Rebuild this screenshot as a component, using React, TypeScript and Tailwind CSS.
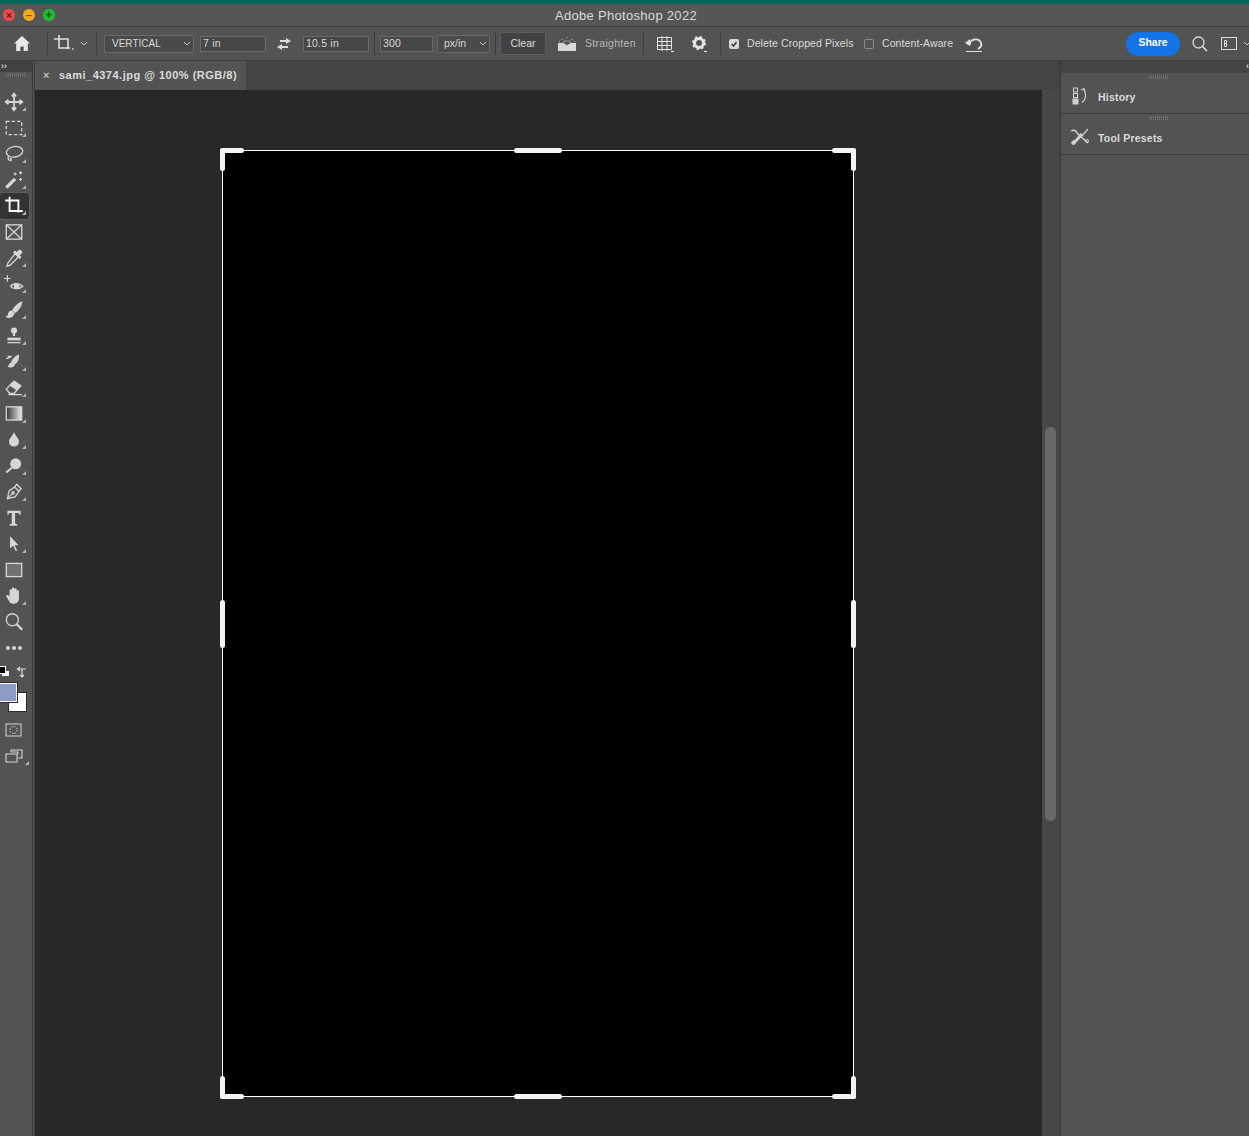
// App.tsx
// Photoshop window: crop tool active, empty panels
import type { ReactNode } from 'react'

const FONT = "font-['Liberation_Sans',Arial,sans-serif]"

// Small triangle in the corner of a tool with a flyout
const Corner = () => (
  <svg className="absolute right-[3px] bottom-[4px]" width="4" height="4" viewBox="0 0 4 4">
    <path d="M4 0v4H0z" fill="#b5b5b5" />
  </svg>
)

function Tool({ active, flyout = true, children }: { active?: boolean; flyout?: boolean; children: ReactNode }) {
  return (
    <div className="flex h-[26px] w-[32px] justify-start">
      <div className={`relative flex h-full w-[29px] items-center justify-center pr-[1px] ${active ? 'rounded-[2px] bg-[#333333] outline outline-1 outline-[#5f5f5f]' : ''}`}>
        <svg width="22" height="22" viewBox="0 0 20 20" fill="none" stroke="#d6d6d6" strokeWidth="1.200">
          {children}
        </svg>
        {flyout && <Corner />}
      </div>
    </div>
  )
}

const TOOLS: { active?: boolean; flyout?: boolean; icon: ReactNode }[] = [
  { icon: <path d="M10 3v14M3 10h14M8 5l2-2.500L12 5M8 15l2 2.500 2-2.500M5 8l-2.500 2L5 12M15 8l2.500 2-2.500 2" strokeWidth="1.600" /> },
  { icon: <rect x="3" y="4" width="14" height="12" strokeDasharray="3 2" strokeWidth="1.200" /> },
  { icon: <><ellipse cx="10.500" cy="8" rx="7.500" ry="4.800" transform="rotate(-10 10.500 8)" /><path d="M5 12c-1 2 0 4 2 4 1 0 1-2-1-2" /></> },
  { icon: <><path d="M3 17l8-8" strokeWidth="3" /><path d="M11 3v3M9.500 4.500h3M16 2v3M14.500 3.500h3M16 8v3M14.500 9.500h3" strokeWidth="1" /></> },
  { active: true, icon: <path d="M2 5h12v11M6 1.500v13h12" strokeWidth="1.700" stroke="#ffffff" /> },
  { flyout: false, icon: <><rect x="3" y="3.500" width="14" height="13" /><path d="M3 3.500l14 13M17 3.500l-14 13" /></> },
  { icon: <><path d="M11 6l3 3-7.500 7.500-3 1 1-3z" /><path d="M10 5l5 5 1-1-1.500-1.500 2-2c1-1-.5-3-2-2l-2 2L11 4z" fill="#d6d6d6" /></> },
  { icon: <><path d="M1 5h6M4 2v6" strokeWidth="1.100" /><path d="M7 12c2-3 8-3 11 0-3 3-9 3-11 0z" /><circle cx="12.500" cy="12" r="2" fill="#d6d6d6" /></> },
  { icon: <><path d="M17 3c-3 1-6 4-8 7l2 2c3-2 5-5 6-9z" fill="#d6d6d6" /><path d="M8 11c-2 0-3 2-3 3 0 1-1 2-2 2 2 1 6 1 7-3z" fill="#d6d6d6" /></> },
  { icon: <><circle cx="10" cy="5" r="2.800" fill="#d6d6d6" stroke="none" /><path d="M9 7h2v3H9z" fill="#d6d6d6" stroke="none" /><path d="M4 11.500h12v2.500H4z" fill="#d6d6d6" stroke="none" /><path d="M4 16h12" /></> },
  { icon: <><path d="M14 4c-3 1-5 4-6 6l2 2c2-1 4-4 4-8z" fill="#d6d6d6" /><path d="M8 11c-2 0-2 2-3 3 2 1 4 0 5-1z" fill="#d6d6d6" /><path d="M3 7l3-1-1-1 3 0" /><path d="M15 11v.1M17 9v.1M17 13v.1" strokeWidth="1.200" /></> },
  { icon: <><path d="M3 11l7-7 6 4-6 7H6z" /><path d="M10 4l6 4-3.500 3.500-6-4z" fill="#d6d6d6" /><path d="M5 16h12" /></> },
  { icon: <><defs><linearGradient id="grad" x1="0" x2="1" y1="0" y2="0"><stop offset="0" stopColor="#333" /><stop offset="1" stopColor="#eee" /></linearGradient></defs><rect x="3" y="3.500" width="14" height="12" fill="url(#grad)" /></> },
  { icon: <path d="M10 3c2 4 4.500 6 4.500 8.500a4.500 4.500 0 0 1-9 0C5.500 9 8 7 10 3z" fill="#d6d6d6" stroke="none" /> },
  { icon: <><circle cx="11.500" cy="8" r="5" fill="#d6d6d6" stroke="none" /><path d="M8 11.500L3 16" strokeWidth="1.800" /></> },
  { icon: <><path d="M4 16l1.500-7 5-3.500 4 4-3.500 5z" /><path d="M10.500 5.500l2-2.500 4 4-2.500 2.500M4 16l4.500-4.500" /><circle cx="9.200" cy="10.800" r="1" /></> },
  { flyout: false, icon: <path d="M4 3.500h12V7h-1l-1-1.500h-3V15l2 1v1H6v-1l2-1V5.500H5.500L5 7H4z" fill="#d6d6d6" stroke="none" /> },
  { icon: <path d="M6 2v13l3-3 2.500 5 2-1-2.500-4.500H15z" fill="#d6d6d6" stroke="#333" strokeWidth="0.600" /> },
  { flyout: false, icon: <rect x="3" y="4" width="14" height="12" fill="#707070" /> },
  { icon: <path d="M6 11V5c0-1.500 2-1.500 2 0V3.500c0-1.500 2.200-1.500 2.200 0V4c0-1.500 2.200-1.500 2.200 0v2c0-1.500 2.100-1.500 2.100 0v6c0 3-2 5-5 5-2.500 0-3.500-1-5-4L3 10.500c-.5-1.500 1.500-2 2.500-.8z" fill="#d6d6d6" stroke="none" /> },
  { flyout: false, icon: <><circle cx="8.500" cy="8" r="5.500" /><path d="M12.500 12l5 5" strokeWidth="2" /></> },
]

function Caret() {
  return (
    <svg width="8" height="5" viewBox="0 0 8 5" fill="none" stroke="#c8c8c8" strokeWidth="1">
      <path d="M1 1l3 3 3-3" />
    </svg>
  )
}

function Field({ w, children }: { w: string; children: ReactNode }) {
  return <div className={`${w} flex h-[16px] items-center border border-[#6a6a6a] bg-[#474747] pl-[2px] text-[10.5px] tracking-[0.2px] text-[#d8d8d8]`}>{children}</div>
}

const Sep = ({ cls }: { cls: string }) => <div className={`${cls} h-[23px] w-px bg-[#3d3d3d]`} />

const Grip = () => <div className="h-[4px] w-[20px] bg-[repeating-linear-gradient(90deg,#6e6e6e_0,#6e6e6e_1px,transparent_1px,transparent_2px)]" />

// Crop handles on top of the image
function Handle({ cls }: { cls: string }) {
  return <div className={`absolute rounded-[3px] bg-[#f4f4f4] ${cls}`} />
}

export default function App() {
  return (
    <div className={`flex h-[1136px] w-[1249px] flex-col overflow-hidden bg-[#535353] ${FONT}`}>
      {/* Bande du haut */}
      <div className="h-[4px] flex-none bg-[#00695c]" />

      {/* Title bar */}
      <div className="relative flex h-[23px] flex-none items-center justify-center border-b border-[#3a3a3a] bg-[#565656] pt-[2px] pl-[3px] text-[13px] tracking-[0.3px] text-[#d9d9d9]">
        Adobe Photoshop 2022
        <div className="absolute top-[5px] left-[3px] flex gap-[8px]">
          <div className="flex h-[12px] w-[12px] items-center justify-center rounded-full bg-[#f14b4e] text-[11px] leading-none font-bold text-[#7a1114]">×</div>
          <div className="flex h-[12px] w-[12px] items-center justify-center rounded-full bg-[#f3a723] text-[11px] leading-none font-bold text-[#7d4d06]">–</div>
          <div className="flex h-[12px] w-[12px] items-center justify-center rounded-full bg-[#1ec12f] text-[12px] leading-none font-bold text-[#0a5410]">+</div>
        </div>
      </div>

      {/* Options bar */}
      <div className="flex h-[34px] flex-none items-center border-b border-[#3d3d3d] bg-[#535353] text-[#d2d2d2] [&>*]:flex-none">
        <svg className="ml-[14px]" width="16" height="15" viewBox="0 0 16 15" fill="#e8e8e8">
          <path d="M8 0l8 7.500h-2.200V15H9.700v-4.500H6.300V15H2.200V7.500H0z" />
        </svg>
        <Sep cls="ml-[17px]" />
        <svg className="ml-[6px]" width="20" height="18" viewBox="0 0 20 18" fill="none" stroke="#e0e0e0" strokeWidth="1.600">
          <path d="M0 4h14v10M5 0v13h11M18 14h1.500" />
        </svg>
        <div className="ml-[6px]"><Caret /></div>
        <Sep cls="ml-[8px]" />

        <div className="ml-[7px] flex h-[18px] w-[90px] items-center justify-between rounded-[2px] border border-[#6a6a6a] bg-[#4a4a4a] pr-[2px] pl-[7px] text-[10px] text-[#d8d8d8]">
          VERTICAL <Caret />
        </div>
        <div className="ml-[6px]"><Field w="w-[66px]">7 in</Field></div>
        <svg className="ml-[11px]" width="14" height="12" viewBox="0 0 14 12" fill="#dcdcdc">
          <path d="M9 0l5 3-5 3V4H3V2h6zM5 6v2h6v2H5v2L0 9z" />
        </svg>
        <div className="ml-[12px]"><Field w="w-[66px]">10.5 in</Field></div>
        <Sep cls="ml-[5px]" />
        <div className="ml-[5px]"><Field w="w-[53px]">300</Field></div>
        <div className="ml-[4px] flex h-[18px] w-[53px] items-center justify-between rounded-[2px] border border-[#6a6a6a] bg-[#4a4a4a] pr-[2px] pl-[6px] text-[10.5px] text-[#d8d8d8]">
          px/in <Caret />
        </div>
        <Sep cls="ml-[5px]" />
        <div className="ml-[4px] flex h-[23px] w-[46px] items-center justify-center rounded-[2px] border border-[#5e5e5e] bg-[#424242] text-[10.5px] text-[#dcdcdc]">Clear</div>

        <svg className="ml-[12px]" width="18" height="14" viewBox="0 0 18 14" fill="#d8d8d8">
          <path d="M0 6h5l4 2.500L13 6h5v8H0z" />
          <path d="M5 6l1-2h6l1 2-4 2.500z" stroke="#d8d8d8" strokeWidth="0.500" fill="none" />
          <path d="M9 0v1M4 2l.5 1M14 2l-.5 1M1 4l1 .8M17 4l-1 .8" stroke="#d8d8d8" strokeWidth="0.800" />
        </svg>
        <span className="ml-[9px] w-[50px] text-[10.5px] tracking-[0.3px] whitespace-nowrap text-[#b9b9b9]">Straighten</span>
        <Sep cls="ml-[8px]" />
        <svg className="ml-[12px]" width="18" height="18" viewBox="0 0 18 18" fill="none" stroke="#e4e4e4" strokeWidth="1">
          <path d="M1.500 2.500h14v12h-14zM1.500 6.500h14M1.500 10.500h14M6 1v15M11 1v15" />
          <path d="M15 16.500h3" strokeWidth="1.200" />
        </svg>
        <svg className="ml-[17px]" width="18" height="18" viewBox="0 0 18 18">
          <circle cx="8" cy="8" r="4.500" fill="none" stroke="#e4e4e4" strokeWidth="3" />
          <circle cx="8" cy="8" r="6" fill="none" stroke="#e4e4e4" strokeWidth="2" strokeDasharray="2.200 2.500" />
          <path d="M13 16.500h3" stroke="#e4e4e4" strokeWidth="1.200" />
        </svg>
        <Sep cls="ml-[11px]" />

        <div className="ml-[8px] flex h-[10px] w-[10px] items-center justify-center rounded-[2px] bg-[#d9d9d9]">
          <svg width="8" height="8" viewBox="0 0 8 8" fill="none" stroke="#3a3a3a" strokeWidth="1.500"><path d="M1.500 4l2 2 3-4" /></svg>
        </div>
        <span className="ml-[8px] w-[107px] text-[10.5px] tracking-[0.1px] whitespace-nowrap text-[#dadada]">Delete Cropped Pixels</span>
        <div className="ml-[10px] h-[10px] w-[10px] rounded-[2px] border border-[#8a8a8a]" />
        <span className="ml-[8px] w-[72px] text-[10.5px] tracking-[0.1px] whitespace-nowrap text-[#dadada]">Content-Aware</span>
        <svg className="ml-[11px]" width="18" height="16" viewBox="0 0 18 16" fill="none" stroke="#e0e0e0" strokeWidth="1.800">
          <path d="M5 9c-1-6 9-8 11-2 1 3-1 5-3 6" />
          <path d="M0 7l5-4v7z" fill="#e0e0e0" stroke="none" />
          <path d="M1 15.500h16" strokeWidth="1" />
        </svg>

        <div className="ml-[143px] flex h-[24px] w-[54px] items-center justify-center rounded-full bg-[#1473e6] pb-[2px] text-[10.5px] font-bold text-white">Share</div>
        <svg className="ml-[12px]" width="16" height="16" viewBox="0 0 16 16" fill="none" stroke="#dcdcdc" strokeWidth="1.300">
          <circle cx="6.500" cy="6.500" r="5.500" /><path d="M10.500 10.500l4.500 4.500" strokeWidth="1.600" />
        </svg>
        <svg className="ml-[13px]" width="17" height="13" viewBox="0 0 17 13" fill="none" stroke="#dcdcdc" strokeWidth="1">
          <rect x="0.500" y="0.500" width="15" height="12" /><path d="M3.500 3.500h2v6h-2zM3.500 6.500h2" />
        </svg>
        <div className="ml-[5px]"><Caret /></div>
      </div>

      {/* Main area */}
      <div className="flex min-h-0 flex-1">
        {/* Tools column */}
        <div className="flex w-[33px] flex-none flex-col border-r border-[#3d3d3d] bg-[#535353]">
          <div className="h-[11px] bg-[#424242] pl-[1px] text-[9px] leading-[10px] font-bold text-[#cfcfcf]">››</div>
          <div className="flex h-[7px] justify-center pt-[1px]"><Grip /></div>
          <div className="h-[10px]" />
          {TOOLS.map((t, i) => (
            <Tool key={i} active={t.active} flyout={t.flyout}>{t.icon}</Tool>
          ))}

          <div className="flex h-[26px] items-center justify-center gap-[2px] pr-[4px]">
            <span className="h-[4px] w-[4px] rounded-full bg-[#d6d6d6]" />
            <span className="h-[4px] w-[4px] rounded-full bg-[#d6d6d6]" />
            <span className="h-[4px] w-[4px] rounded-full bg-[#d6d6d6]" />
          </div>

          {/* Colors */}
          <div className="relative h-[52px]">
            <div className="absolute top-[10px] left-[2px] h-[5px] w-[7px] bg-white" />
            <div className="absolute top-[6px] left-0 h-[6px] w-[5px] bg-black outline outline-1 outline-white" />
            <svg className="absolute top-[5px] left-[16px]" width="11" height="12" viewBox="0 0 11 12" fill="none" stroke="#dcdcdc" strokeWidth="1.200">
              <path d="M10 3H2M4 1L1.500 3 4 5M6 3v8M4 9l2 2 2-2" />
            </svg>
            <div className="absolute top-[31px] left-[8px] h-[20px] w-[19px] border border-[#2b2b2b] bg-white" />
            <div className="absolute top-[22px] -left-[1px] h-[19px] w-[18px] border border-white bg-[#8d9cc4] outline outline-1 outline-[#2b2b2b]" />
          </div>

          <div className="flex h-[24px] items-end justify-start pl-[5px]">
            <svg width="18" height="14" viewBox="0 0 18 14" fill="none" stroke="#d6d6d6">
              <rect x="1" y="1" width="15" height="12" /><circle cx="8.500" cy="7" r="3.500" strokeDasharray="1.500 1.200" />
            </svg>
          </div>
          <div className="relative mt-[12px] h-[20px] pl-[5px]">
            <svg width="18" height="14" viewBox="0 0 18 14" fill="none" stroke="#d6d6d6" strokeWidth="1.100">
              <path d="M6 3V1h11v8h-4M1 5h11v8H1zM6 3h7v2" />
            </svg>
            <Corner />
          </div>
        </div>

        {/* Document */}
        <div className="ml-[1px] flex min-w-0 flex-1 flex-col border-l border-[#3d3d3d]">
          <div className="flex h-[29px] flex-none bg-[#444444]">
            <div className="flex w-[211px] items-center bg-[#535353] pl-[8px] text-[11px] font-bold tracking-[0.5px] whitespace-nowrap text-[#dcdcdc]">
              <span className="mr-[9px] text-[11px] leading-none text-[#bdbdbd]">×</span>
              sami_4374.jpg @ 100% (RGB/8)
            </div>
          </div>
          <div className="flex min-h-0 flex-1">
            <div className="flex-1 bg-[#282828] pt-[60px] pl-[187px]">
              <div className="relative h-[947px] w-[632px] border border-white bg-black">
                {/* corners */}
                <Handle cls="-top-[3px] -left-[3px] h-[5px] w-[24px]" />
                <Handle cls="-top-[3px] -left-[3px] h-[23px] w-[5px]" />
                <Handle cls="-top-[3px] -right-[3px] h-[5px] w-[24px]" />
                <Handle cls="-top-[3px] -right-[3px] h-[23px] w-[5px]" />
                <Handle cls="-bottom-[3px] -left-[3px] h-[5px] w-[24px]" />
                <Handle cls="-bottom-[3px] -left-[3px] h-[23px] w-[5px]" />
                <Handle cls="-right-[3px] -bottom-[3px] h-[5px] w-[24px]" />
                <Handle cls="-right-[3px] -bottom-[3px] h-[23px] w-[5px]" />
                {/* edges */}
                <Handle cls="-top-[3px] left-[291px] h-[5px] w-[48px]" />
                <Handle cls="-bottom-[3px] left-[291px] h-[5px] w-[48px]" />
                <Handle cls="top-[449px] -left-[3px] h-[48px] w-[5px]" />
                <Handle cls="top-[449px] -right-[3px] h-[48px] w-[5px]" />
              </div>
            </div>
            {/* Scrollbar */}
            <div className="w-[17px] flex-none bg-[#484848] pt-[337px] pl-[3px]">
              <div className="h-[394px] w-[11px] rounded-[6px] bg-[#686868]" />
            </div>
          </div>
        </div>

        {/* Right panels */}
        <div className="w-[190px] flex-none border-l-2 border-[#3d3d3d] bg-[#535353]">
          <div className="relative h-[12px] bg-[#444444]">
            <span className="absolute top-0 right-0 text-[9px] leading-[11px] font-bold text-[#cfcfcf]">‹</span>
          </div>
          <div className="relative flex h-[41px] items-center border-b border-[#3d3d3d] pt-[10px] pl-[37px] text-[10.5px] font-bold tracking-[0.2px] text-[#dcdcdc]">
            <div className="absolute top-[2px] left-[88px]"><Grip /></div>
            <svg className="absolute top-[14px] left-[11px]" width="16" height="18" viewBox="0 0 16 18" fill="none" stroke="#d0d0d0">
              <rect x="1.500" y="1" width="4" height="4" /><rect x="1.500" y="6.500" width="4" height="4" /><rect x="1" y="12" width="5" height="5" fill="#d0d0d0" />
              <path d="M9 3l3-1.500 1 3-1-1.500c3 5 1 11-2 12.500" strokeWidth="1.200" />
            </svg>
            History
          </div>
          <div className="relative flex h-[41px] items-center border-b border-[#3d3d3d] pt-[10px] pl-[37px] text-[10.5px] font-bold tracking-[0.2px] text-[#dcdcdc]">
            <div className="absolute top-[2px] left-[88px]"><Grip /></div>
            <svg className="absolute top-[14px] left-[9px]" width="20" height="18" viewBox="0 0 20 18" fill="none" stroke="#d0d0d0">
              <path d="M3 16L12 6" strokeWidth="3" /><path d="M2 16l3-3" strokeWidth="3.500" />
              <path d="M1 3c3-2 5 0 6 2l11 10" strokeWidth="1.500" />
              <circle cx="17" cy="13" r="1.500" />
              <path d="M18 1L11 9" strokeWidth="1.200" />
            </svg>
            Tool Presets
          </div>
        </div>
      </div>
    </div>
  )
}
